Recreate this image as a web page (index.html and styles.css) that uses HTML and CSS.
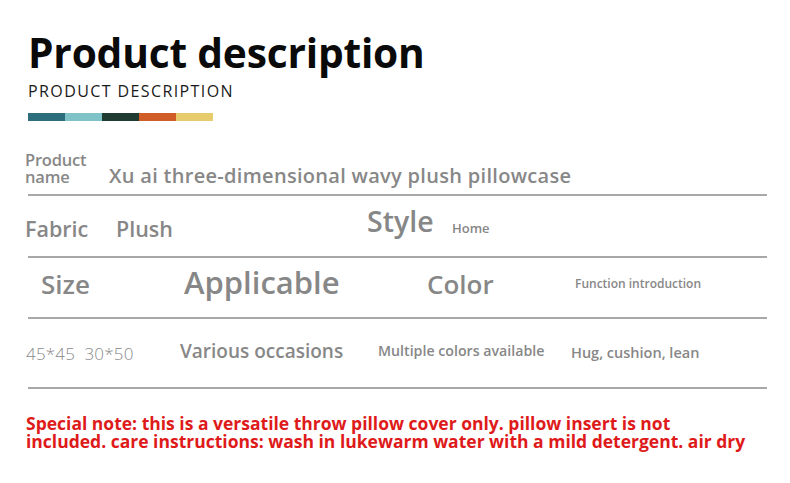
FILE: index.html
```html
<!DOCTYPE html>
<html>
<head>
<meta charset="utf-8">
<link rel="stylesheet" href="styles.css">
</head>
<body>
<div class="page">
  <header class="head">
    <h1 class="title">Product description</h1>
    <div class="subtitle">PRODUCT DESCRIPTION</div>
    <div class="bars">
      <span class="bar c1"></span><span class="bar c2"></span><span class="bar c3"></span><span class="bar c4"></span><span class="bar c5"></span>
    </div>
  </header>

  <section class="table">
    <div class="row r1">
      <div class="label-small">Product<br>name</div>
      <div class="name-val">Xu ai three-dimensional wavy plush pillowcase</div>
    </div>
    <div class="rule"></div>
    <div class="row r2">
      <div class="fabric">Fabric</div>
      <div class="plush">Plush</div>
      <div class="style">Style</div>
      <div class="home">Home</div>
    </div>
    <div class="rule"></div>
    <div class="row r3">
      <div class="size">Size</div>
      <div class="applicable">Applicable</div>
      <div class="color">Color</div>
      <div class="func">Function introduction</div>
    </div>
    <div class="rule"></div>
    <div class="row r4">
      <div class="dims">45*45&nbsp;&nbsp;30*50</div>
      <div class="occ">Various occasions</div>
      <div class="multi">Multiple colors available</div>
      <div class="hug">Hug, cushion, lean</div>
    </div>
    <div class="rule"></div>
  </section>

  <p class="note">Special note: this is a versatile throw pillow cover only. pillow insert is not<br>included. care instructions: wash in lukewarm water with a mild detergent. air dry</p>
</div>
</body>
</html>
```

FILE: styles.css
```css
* { box-sizing: border-box; }
html, body { margin: 0; padding: 0; background: #ffffff; }
body { font-family: "Open Sans", "Noto Sans", sans-serif; color: #888888; width: 790px; height: 483px; overflow: hidden; }

.head { padding: 26px 0 0 28px; }
.title { margin: 0; font-family: "Open Sans", sans-serif; font-weight: 700; font-size: 40.7px; line-height: 52px; color: #0a0a0a; letter-spacing: -0.2px; }
.subtitle { margin-top: 3px; font-size: 16px; line-height: 20px; letter-spacing: 1.4px; color: #1a1a1a; font-weight: 400; }
.bars { display: flex; margin-top: 12px; height: 8px; }
.bar { width: 37px; height: 8px; display: block; }
.c1 { background: #2c6e7c; }
.c2 { background: #7fc3c8; }
.c3 { background: #203b31; }
.c4 { background: #d05c27; }
.c5 { background: #e6cc6c; }

.table { margin-top: 24px; padding-left: 25px; }
.rule { height: 2px; background: #a8a8a8; margin: 0 23px 0 3px; }
.row { display: flex; align-items: flex-start; font-weight: 600; color: #878787; line-height: normal; }

.r1 { height: 49px; }
.label-small { width: 84px; font-size: 16.5px; line-height: 16.5px; margin-top: 7px; letter-spacing: -0.2px; }
.name-val { font-size: 20px; letter-spacing: 0.3px; margin-top: 16.5px; }

.r2 { height: 60px; }
.fabric { width: 91px; font-size: 21.5px; margin-top: 18px; }
.plush { width: 251px; font-size: 21.5px; margin-top: 18px; }
.style { width: 85px; font-size: 28.5px; margin-top: 5.5px; }
.home { font-size: 13px; margin-top: 23px; }

.r3 { height: 59px; }
.size { width: 159px; padding-left: 16px; font-size: 26px; margin-top: 8px; }
.applicable { width: 243px; font-size: 31px; margin-top: 3px; }
.color { width: 148px; font-size: 26px; margin-top: 8px; }
.func { font-size: 12px; margin-top: 17px; }

.r4 { height: 68px; }
.dims { width: 155px; padding-left: 1px; font-size: 17px; font-weight: 300; color: #8a8a8a; letter-spacing: 0.2px; margin-top: 23px; }
.occ { width: 198px; font-size: 19px; margin-top: 19px; }
.multi { width: 193px; font-size: 14.2px; margin-top: 22px; }
.hug { font-size: 14.5px; margin-top: 23.5px; }

.note { margin: 25px 0 0 26px; font-size: 17.5px; line-height: 18px; font-weight: 700; color: #de1a1a; letter-spacing: 0; }
```
